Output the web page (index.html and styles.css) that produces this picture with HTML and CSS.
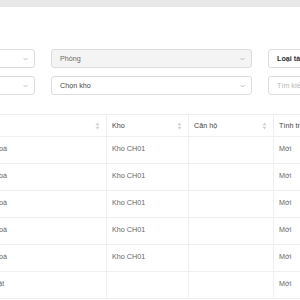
FILE: index.html
```html
<!DOCTYPE html>
<html lang="vi">
<head>
    <meta charset="UTF-8">
    <meta name="viewport" content="width=device-width, initial-scale=1.0">
    <title>Danh sách tài sản</title>
    <link rel="stylesheet" href="styles.css">
</head>
<body>

    <div class="topbar"></div>

    <!-- Bộ lọc -->
    <div class="filters">
        <div class="select">
            <span class="value">Toà nhà</span>
            <svg class="chevron" viewBox="0 0 8 5"><path d="M1 1l3 3 3-3"/></svg>
        </div>
        <div class="select disabled">
            <span class="placeholder">Phòng</span>
            <svg class="chevron" viewBox="0 0 8 5"><path d="M1 1l3 3 3-3"/></svg>
        </div>
        <div class="select">
            <span class="strong">Loại tài sản</span>
            <svg class="chevron" viewBox="0 0 8 5"><path d="M1 1l3 3 3-3"/></svg>
        </div>
        <div class="select">
            <span class="value">Trạng thái</span>
            <svg class="chevron" viewBox="0 0 8 5"><path d="M1 1l3 3 3-3"/></svg>
        </div>
        <div class="select">
            <span class="muted">Chọn kho</span>
            <svg class="chevron" viewBox="0 0 8 5"><path d="M1 1l3 3 3-3"/></svg>
        </div>
        <div class="select search">
            <span class="hint">Tìm kiếm</span>
        </div>
    </div>

    <!-- Bảng tài sản -->
    <table class="asset-table">
        <colgroup>
            <col class="col-status">
            <col class="col-store">
            <col class="col-room">
            <col class="col-state">
        </colgroup>
        <thead>
            <tr>
                <th><div class="th-inner"><span>Tên</span><svg class="sorter" viewBox="0 0 6 10"><path d="M3 0.5L5.5 4H0.5z"/><path d="M3 9.5L5.5 6H0.5z"/></svg></div></th>
                <th><div class="th-inner"><span>Kho</span><svg class="sorter" viewBox="0 0 6 10"><path d="M3 0.5L5.5 4H0.5z"/><path d="M3 9.5L5.5 6H0.5z"/></svg></div></th>
                <th><div class="th-inner"><span>Căn hộ</span><svg class="sorter" viewBox="0 0 6 10"><path d="M3 0.5L5.5 4H0.5z"/><path d="M3 9.5L5.5 6H0.5z"/></svg></div></th>
                <th><div class="th-inner"><span>Tình trạng</span></div></th>
            </tr>
        </thead>
        <tbody>
            <tr><td>Chưa hoà</td><td>Kho CH01</td><td></td><td>Mới</td></tr>
            <tr><td>Chưa hoà</td><td>Kho CH01</td><td></td><td>Mới</td></tr>
            <tr><td>Chưa hoà</td><td>Kho CH01</td><td></td><td>Mới</td></tr>
            <tr><td>Chưa hoà</td><td>Kho CH01</td><td></td><td>Mới</td></tr>
            <tr><td>Chưa hoà</td><td>Kho CH01</td><td></td><td>Mới</td></tr>
            <tr><td>Cập nhật</td><td></td><td></td><td>Mới</td></tr>
        </tbody>
    </table>

</body>
</html>
```

FILE: styles.css
```css
body {
    margin: 0;
    font-family: 'Liberation Sans', Arial, sans-serif;
    background-color: #fff;
    color: #666;
    overflow: hidden;
    width: 300px;
    height: 300px;
}

.topbar {
    height: 7px;
    background-color: #e8e8e8;
}

/* Filter bar */
.filters {
    display: grid;
    grid-template-columns: repeat(3, 201px);
    column-gap: 16px;
    row-gap: 8px;
    margin-top: 42px;
    margin-left: -166px;
}

.select {
    box-sizing: border-box;
    height: 19px;
    border: 1px solid #dcdcdc;
    border-radius: 3px;
    padding: 0 6px 0 8px;
    display: flex;
    align-items: center;
    justify-content: space-between;
    font-size: 7.2px;
    white-space: nowrap;
    overflow: hidden;
}

.select.disabled {
    background-color: #f4f4f4;
}

.placeholder {
    color: #6c6c6c;
}

.muted {
    color: #4a4a4a;
}

.strong {
    color: #333;
    font-weight: bold;
}

.hint {
    color: #b8b8b8;
}

.chevron {
    width: 5px;
    height: 4px;
    fill: none;
    stroke: #a8a8a8;
    stroke-width: 1.2;
}

/* Table */
.asset-table {
    margin-top: 19px;
    margin-left: -31px;
    border-collapse: collapse;
    table-layout: fixed;
    width: 404px;
    font-size: 7.2px;
}

.col-status { width: 137px; }
.col-store { width: 82px; }
.col-room { width: 85px; }
.col-state { width: 100px; }

.asset-table th,
.asset-table td {
    border: 1px solid #efeff2;
    border-top: none;
    padding: 0 5px;
    text-align: left;
    white-space: nowrap;
    overflow: hidden;
}

.asset-table thead th {
    border-top: 1px solid #efeff2;
    height: 21px;
    font-weight: normal;
    color: #444;
}

.asset-table td {
    height: 22px;
    padding-bottom: 4px;
}

.th-inner {
    display: flex;
    align-items: center;
    justify-content: space-between;
}

.sorter {
    width: 5px;
    height: 8px;
    fill: #d0d0d0;
    margin-right: 1px;
}
```
